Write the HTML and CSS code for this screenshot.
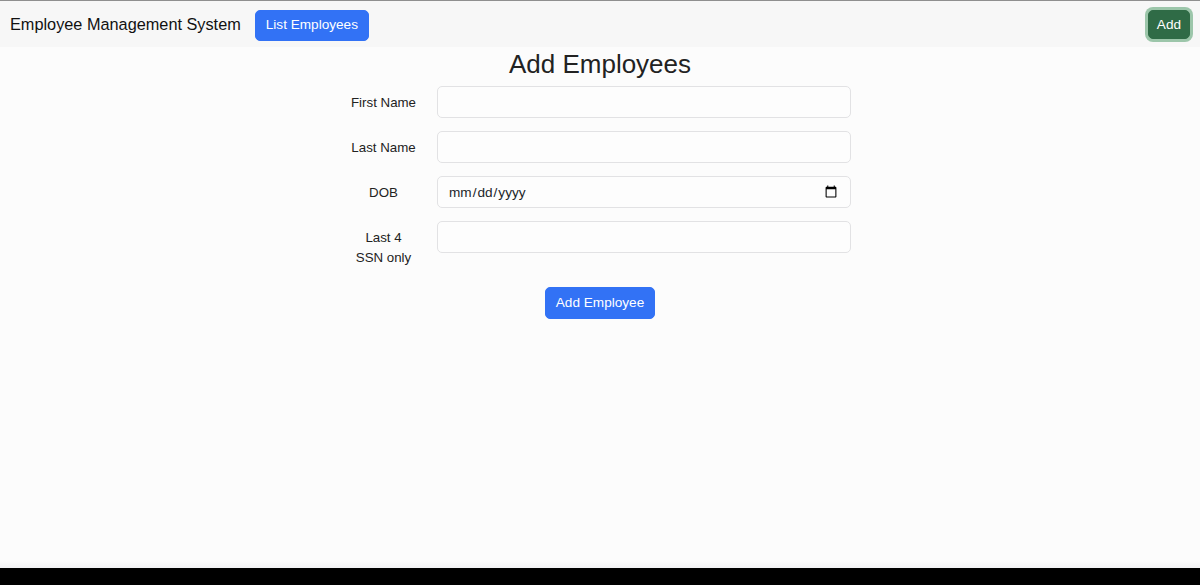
FILE: index.html
```html
<!DOCTYPE html>
<html>
<head>
<meta charset="utf-8">
<link rel="stylesheet" href="styles.css">
</head>
<body>
<div class="screen">
  <nav class="navbar">
    <span class="brand">Employee Management System</span>
    <button class="btn btn-primary nav-link-btn">List Employees</button>
    <span class="spacer"></span>
    <button class="btn btn-success">Add</button>
  </nav>
  <main class="main">
    <h2 class="title">Add Employees</h2>
    <form class="form">
      <label class="label">First Name</label>
      <input class="input" type="text">
      <label class="label">Last Name</label>
      <input class="input" type="text">
      <label class="label">DOB</label>
      <input class="input" type="date">
      <label class="label">Last 4<br>SSN only</label>
      <input class="input" type="text">
    </form>
    <div class="actions">
      <button class="btn btn-primary">Add Employee</button>
    </div>
  </main>
</div>
<div class="bottom"></div>
</body>
</html>
```

FILE: styles.css
```css
* { box-sizing: border-box; }
html, body { margin: 0; padding: 0; }
body {
  background: #000;
  font-family: "Liberation Sans", Arial, sans-serif;
  color: #212529;
  width: 1200px;
  height: 585px;
  overflow: hidden;
}
.screen {
  height: 568px;
  background: linear-gradient(to bottom, #fcfcfc 0, #fcfcfc 560px, #f1f1f3 568px);
  border-top: 1px solid #8f8f8f;
}
.navbar {
  height: 46px;
  background: #f7f7f7;
  display: flex;
  align-items: center;
  padding: 0 8px 0 10px;
}
.brand {
  font-size: 16.3px;
  color: #111;
  margin-right: 14px;
}
.spacer { flex: 1; }
.btn {
  font-family: inherit;
  font-size: 13.3px;
  line-height: 20px;
  border: 1px solid transparent;
  border-radius: 5px;
  padding: 5px 10px;
  color: #fff;
  cursor: pointer;
}
.btn-primary {
  background: #3272f5;
  border-color: #3272f5;
}
.nav-link-btn {
  height: 31px;
  padding: 4px 10px;
  margin-top: 2px;
  font-size: 13.6px;
}
.btn-success {
  background: #2f6b46;
  border-color: #2f6b46;
  box-shadow: 0 0 0 3px #9cc6aa;
  height: 29px;
  padding: 3px 8px;
  margin-right: 2px;
  margin-top: 1px;
  font-size: 13.6px;
}
.main {
  display: flex;
  flex-direction: column;
  align-items: center;
}
.title {
  margin: 1px 0 6px;
  font-size: 26px;
  font-weight: 500;
  line-height: 32px;
  color: #222;
}
.form {
  width: 540px;
  display: grid;
  grid-template-columns: 107px 414px;
  row-gap: 13px;
  align-items: start;
}
.label {
  font-size: 13.3px;
  line-height: 20px;
  padding: 7px 10px 0;
  text-align: center;
  color: #222;
}
.input {
  height: 32px;
  border: 1px solid #e2e2e4;
  border-radius: 5px;
  background: #fdfdfd;
  font-family: inherit;
  font-size: 13.6px;
  color: #212529;
  padding: 0 10px;
  outline: none;
}
.actions {
  margin-top: 19px;
  display: flex;
  justify-content: center;
}
.actions .btn {
  height: 32px;
  padding: 5px 10px;
  font-size: 13.6px;
}
.bottom {
  height: 17px;
  background: #000;
}
```
